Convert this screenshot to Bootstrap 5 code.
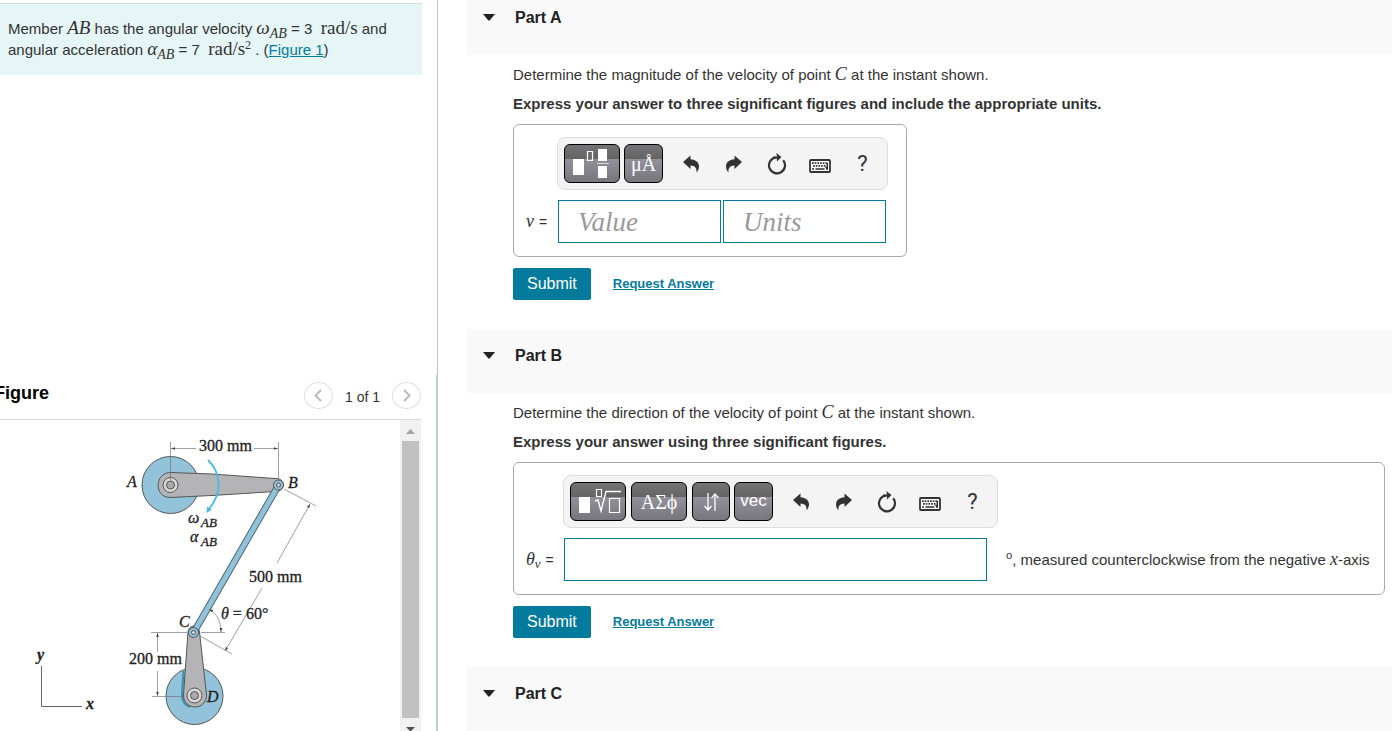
<!DOCTYPE html>
<html lang="en">
<head>
<meta charset="utf-8">
<meta name="viewport" content="width=device-width, initial-scale=1">
<title>Member AB angular velocity</title>
<link href="https://cdn.jsdelivr.net/npm/bootstrap@5.3.0/dist/css/bootstrap.min.css" rel="stylesheet">
<style>
  body { font-family: "Liberation Sans", Arial, sans-serif; font-size: 14px; line-height: 21px; color: #333; background: #fff; }
  a { color: #047b9c; }
  .side { width: 438px; flex: none; }
  .side-top { height: 375px; border-right: 1px solid #b9c6d6; padding: 3px 15px 0 0; }
  .side-figure { border-right: 2px solid #b8cde0; padding-right: 15px; }
  .intro { background: #e6f5f6; border-top: 1px solid #d5dde0; padding: 14px 8px 15px; }
  .intro, .prompt, .suffix { font-size: 15px; }
  .math { font-family: "Liberation Serif", serif; font-size: 18px; line-height: 0; }
  .intro .math { font-size: 19px; }
  .math sub { font-size: 14px; bottom: -4px; line-height: 0; }
  .math sup { font-size: 12px; line-height: 0; }
  .figure-head { height: 45px; border-bottom: 1px solid #d9d9d9; padding-bottom: 4px; }
  .figure-title { font-size: 18px; font-weight: 700; color: #000; margin: 0 0 2px -6px; }
  .pager { width: 29px; height: 27px; border: 1px solid #e0e0e0; border-radius: 50%; background: #fff; color: #bbb; }
  .scroll-track { width: 21px; background: #f1f1f1; padding: 9px 2px 0; }
  .scroll-thumb { background: #c1c1c1; height: 277px; margin: 7px 0 9px; }
  .drawing text { font-family: "Liberation Serif", serif; font-size: 16px; fill: #222; stroke: #222; stroke-width: .3px; }
  .drawing .it { font-style: italic; }
  .drawing .subs { font-size: 13px; }
  .main-col { padding-left: 29px; min-width: 0; }
  .part-head { background: #f9f9f9; padding: 15px 16px 25px; gap: 20px; }
  .part-head:first-child { padding-top: 6px; }
  .part-head h2 { font-size: 16px; font-weight: 700; line-height: 24px; color: #222; margin: 0; }
  .caret-btn { width: 12px; height: 22px; color: #222; margin-bottom: 2px; }
  .part-body { padding: 9px 7px 29px 46px; }
  .prompt { line-height: 21px; margin: 0 0 8px; }
  .answer-box { border: 1px solid #aaa; border-radius: 6px; padding: 12px 18px 13px 12px; margin: 10px 0 11px; }
  .answer-box.compact { width: 394px; }
  .label-a { width: 31px; }
  .label-b { width: 37px; }
  .tools { background: #f4f4f4; border: 1px solid #ddd; border-radius: 8px; height: 53px; padding: 0 3px 0 6px; width: max-content; gap: 4px; margin-bottom: 10px; }
  .math-tools .key.broad { margin-right: 1px; }
  .key { width: 56px; height: 39px; border: 1px solid #000; border-radius: 6px; color: #fff; padding: 0; line-height: 1;
    background: linear-gradient(#747476 0, #646464 38%, #92909a 39%, #77767c 100%); }
  .key.narrow { width: 39px; }
  .key.slim { width: 38px; }
  .key.serif { font-family: "Liberation Serif", serif; font-size: 20px; }
  .key.sans { font-size: 17px; padding-bottom: 3px; }
  .tool { width: 43px; height: 39px; color: #333; }
  .tool.help { font-family: Roboto, sans-serif; font-size: 22px; line-height: 1; }
  .icon-set { margin-left: 2px; }
  .entries { margin-left: 1px; gap: 2px; }
  .entry { height: 43px; border: 1px solid #047b9c; border-radius: 0; background: #fff; padding: 2px 19px 0; font-family: "Liberation Serif", serif; font-size: 27px; color: #333; }
  .entry::placeholder { font-style: italic; color: #999; }
  .entry.half { width: 163px; }
  .entry.wide { width: 423px; margin-right: 17px; min-width: 0; }
  .entry-label { margin-bottom: 10px; }
  .entry-label .math { font-size: 18px; margin-right: 1px; }
  .entry-label .math sub { font-size: 13px; bottom: -3px; }
  .submit { background: #047b9c; color: #fff; font-size: 16px; line-height: 30px; border-radius: 2px; padding: 0 14px; height: 32px; margin-right: 22px; }
  .request { font-size: 13px; font-weight: 700; padding-bottom: 2px; }
</style>
</head>
<body>
<svg width="0" height="0" class="position-absolute" aria-hidden="true">
  <symbol id="undo" viewBox="0 0 16 18"><path d="M0 7 7.500 .5v3.700c5.500.4 8.500 3.300 8.500 7 0 2.500-1 4.500-2.500 6.300.5-4.500-1.500-6.800-6-7V14z" fill="currentColor"/></symbol>
  <symbol id="redo" viewBox="0 0 16 18"><path d="M16 7 8.500 .5v3.700c-5.500.4-8.500 3.300-8.500 7 0 2.500 1 4.500 2.500 6.300-.5-4.500 1.500-6.800 6-7V14z" fill="currentColor"/></symbol>
  <symbol id="reset" viewBox="0 0 20 22"><path d="M16.200 7.300A8 8 0 1 1 8.500 4.500" fill="none" stroke="currentColor" stroke-width="2.200"/><path d="M6 3.400h4L9.200 0 14.500 4 10 8.400 9.800 5.600 6.500 6z" fill="currentColor"/></symbol>
  <symbol id="keys" viewBox="0 0 22 14"><rect x="1" y="1" width="20" height="12" rx="1" fill="#fff" stroke="currentColor" stroke-width="1.800"/><path d="M3 4.200h16M4 6.800h13" stroke="currentColor" stroke-width="1.700" stroke-dasharray="1.700 1"/><path d="M3 10h2M6.500 10h9M17 10h2M18.300 4v4.500h-2" fill="none" stroke="currentColor" stroke-width="1.500"/></symbol>
  <symbol id="caret" viewBox="0 0 12 7"><path d="M0 0h12L6.800 6.300q-.8.700-1.600 0z" fill="currentColor"/></symbol>
</svg>

<div class="d-flex min-vh-100">
  <aside class="side d-flex flex-column">
    <div class="side-top">
      <div class="intro">Member <i class="math">AB</i> has the angular velocity <span class="math"><i>ω<sub>AB</sub></i></span> = 3 &nbsp;<span class="math">rad/s</span> and angular acceleration <span class="math"><i>α<sub>AB</sub></i></span> = 7 &nbsp;<span class="math">rad/s<sup>2</sup></span> . (<a href="#figure">Figure 1</a>)</div>
    </div>
    <section class="side-figure flex-fill d-flex flex-column" id="figure">
      <div class="figure-head d-flex align-items-center">
        <h2 class="figure-title me-auto">Figure</h2>
        <button type="button" class="pager p-0 d-flex align-items-center justify-content-center" aria-label="Previous figure"><svg width="8" height="13" viewBox="0 0 8 13"><path d="M7 1 1.500 6.500 7 12" fill="none" stroke="currentColor" stroke-width="2"/></svg></button>
        <span class="px-2 pt-1 mx-1">1 of 1</span>
        <button type="button" class="pager p-0 d-flex align-items-center justify-content-center" aria-label="Next figure"><svg width="8" height="13" viewBox="0 0 8 13"><path d="m1 1 5.500 5.500L1 12" fill="none" stroke="currentColor" stroke-width="2"/></svg></button>
      </div>
      <div class="d-flex flex-fill">
        <div class="flex-fill">
          <svg class="drawing d-block" width="400" height="311" viewBox="0 420 400 311" role="img" aria-label="Linkage ABCD">
            <defs>
              <marker id="tip" viewBox="0 0 6 6" refX="6" refY="3" markerUnits="userSpaceOnUse" markerWidth="4" markerHeight="4" orient="auto-start-reverse"><path d="M0 1 6 3 0 5z" fill="#444"/></marker>
            </defs>
            <!-- disks and arms -->
            <circle cx="170.500" cy="485" r="28.500" fill="#93c3da" stroke="#555"/>
            <path d="M171 472.500 212 474l63 4.500c11-1 11 13.500 0 13L212 495.500 170 497.500c-16 0-16-25 1-25z" fill="#b4b4b6" stroke="#555"/>
            <circle cx="194.500" cy="696" r="28.500" fill="#93c3da" stroke="#555"/>
            <path d="M183.500 671 182 695c0 7 4 11 8 12" fill="none" stroke="#3592ad" stroke-width="2"/>
            <path d="M188 632 183.500 695c0 16 23 16 23 0L199.500 632c-1-8-10.500-8-11.500 0z" fill="#b4b4b6" stroke="#555"/>
            <path d="M277.500 487 194 632" stroke="#4f6773" stroke-width="7"/>
            <path d="M277.500 487 194 632" stroke="#8fc3da" stroke-width="5"/>
            <g fill="#d8d8d8" stroke="#555">
              <circle cx="170.500" cy="485" r="7.500"/><circle cx="170.500" cy="485" r="4" fill="#aaa"/>
              <circle cx="194.500" cy="695.500" r="7.500"/><circle cx="194.500" cy="695.500" r="4" fill="#aaa"/>
              <circle cx="278.500" cy="485" r="5" fill="#8fc3da"/><circle cx="278.500" cy="485" r="2"/>
              <circle cx="193.500" cy="632.500" r="5" fill="#8fc3da"/><circle cx="193.500" cy="632.500" r="2"/>
            </g>
            <!-- dimension lines -->
            <g fill="none" stroke="#777" stroke-width=".7">
              <path d="M170.500 442v39M278.500 442v39M284 489l32 17M200 636l32 18M151 632.500h36M201 632.500h24M152 696.500h31"/>
              <path d="M196 448.500h-25" marker-end="url(#tip)"/>
              <path d="M254 448.500h24" marker-end="url(#tip)"/>
              <path d="M277 563l33-59" marker-end="url(#tip)"/>
              <path d="M262 588 225 651" marker-end="url(#tip)"/>
              <path d="M157.500 652v-19" marker-end="url(#tip)"/>
              <path d="M157.500 671v25" marker-end="url(#tip)"/>
              <path d="M209 609c8 5 12 12 12 23" marker-start="url(#tip)" marker-end="url(#tip)"/>
            </g>
            <path d="M208 460c13 13 15 32 1 49" fill="none" stroke="#45bce8" stroke-width="1.800"/>
            <path d="m206.500 513 .6-6.500 4.500 3.300z" fill="#45bce8"/>
            <path d="M41.500 666v40.500H82" fill="none" stroke="#666"/>
            <text x="199" y="451">300 mm</text>
            <text x="249" y="582">500 mm</text>
            <text x="129" y="664">200 mm</text>
            <text x="221" y="619"><tspan class="it">θ</tspan> = 60°</text>
            <g class="it">
              <text x="127" y="487">A</text><text x="288" y="488">B</text>
              <text x="179" y="627">C</text><text x="207" y="702">D</text>
              <text x="188" y="523">ω<tspan class="subs" x="201" y="527">AB</tspan></text>
              <text x="190" y="542">α<tspan class="subs" x="201" y="546">AB</tspan></text>
              <text x="37" y="660" font-weight="bold">y</text><text x="86" y="709" font-weight="bold">x</text>
            </g>
          </svg>
        </div>
        <div class="scroll-track" aria-hidden="true">
          <svg class="d-block mx-auto" width="9" height="5" viewBox="0 0 9 5"><path d="M0 5 4.500 0 9 5z" fill="#a3a3a3"/></svg>
          <div class="scroll-thumb"></div>
          <svg class="d-block mx-auto" width="9" height="4" viewBox="0 0 9 4"><path d="M0 0h9L5 4H4z" fill="#505050"/></svg>
        </div>
      </div>
    </section>
  </aside>

  <main class="main-col flex-fill">
    <div class="part-head d-flex align-items-center">
      <button type="button" class="caret-btn btn p-0 border-0 d-flex align-items-center" aria-label="Collapse Part A"><svg width="12" height="7"><use href="#caret"/></svg></button>
      <h2>Part A</h2>
    </div>
    <section class="part-body">
      <p class="prompt">Determine the magnitude of the velocity of point <i class="math">C</i> at the instant shown.</p>
      <p class="prompt fw-bold">Express your answer to three significant figures and include the appropriate units.</p>
      <div class="answer-box compact d-flex">
        <div class="label-a flex-shrink-0 d-flex align-items-end"><label class="entry-label" for="value"><i class="math">v</i> =</label></div>
        <div>
          <div class="tools d-flex align-items-center">
            <button type="button" class="key broad" aria-label="Templates"><svg width="54" height="37" viewBox="0 0 54 37"><path d="M8 14h11v16H8zM33 4h9v12h-9zM33 21h9v12h-9z" fill="#fff"/><path d="M22.500 6.500h5v9h-5z" fill="none" stroke="#fff" stroke-width="1.200"/><path d="M32 18.500h12" stroke="#ddd"/></svg></button>
            <button type="button" class="key narrow serif">μÅ</button>
            <div class="icon-set d-flex">
              <button type="button" class="tool btn p-0 border-0" aria-label="Undo"><svg width="16" height="18"><use href="#undo"/></svg></button>
              <button type="button" class="tool btn p-0 border-0" aria-label="Redo"><svg width="16" height="18"><use href="#redo"/></svg></button>
              <button type="button" class="tool btn p-0 border-0" aria-label="Reset"><svg width="20" height="22"><use href="#reset"/></svg></button>
              <button type="button" class="tool btn p-0 border-0 pt-1" aria-label="Keyboard shortcuts"><svg width="22" height="14"><use href="#keys"/></svg></button>
              <button type="button" class="tool help btn p-0 border-0">?</button>
            </div>
          </div>
          <div class="entries d-flex">
            <input class="entry half" id="value" type="text" placeholder="Value">
            <input class="entry half" type="text" placeholder="Units" aria-label="Units">
          </div>
        </div>
      </div>
      <div class="d-flex align-items-center">
        <button type="button" class="submit btn border-0">Submit</button>
        <a class="request" href="#request-a">Request Answer</a>
      </div>
    </section>

    <div class="part-head d-flex align-items-center">
      <button type="button" class="caret-btn btn p-0 border-0 d-flex align-items-center" aria-label="Collapse Part B"><svg width="12" height="7"><use href="#caret"/></svg></button>
      <h2>Part B</h2>
    </div>
    <section class="part-body">
      <p class="prompt">Determine the direction of the velocity of point <i class="math">C</i> at the instant shown.</p>
      <p class="prompt fw-bold">Express your answer using three significant figures.</p>
      <div class="answer-box d-flex">
        <div class="label-b flex-shrink-0 d-flex align-items-end"><label class="entry-label" for="theta"><i class="math">θ<sub>v</sub></i> =</label></div>
        <div class="flex-fill">
          <div class="tools math-tools d-flex align-items-center">
            <button type="button" class="key broad" aria-label="Math templates"><svg width="54" height="37" viewBox="0 0 54 37"><path d="M8 14h11v16H8z" fill="#fff"/><path d="M25.500 6.500h5v7h-5zM38.500 15.500h10v14h-10z" fill="none" stroke="#fff" stroke-width="1.200"/><path d="m24 18 3-1 3 11 5-19.500h15" fill="none" stroke="#fff" stroke-width="1.400"/></svg></button>
            <button type="button" class="key broad serif">ΑΣϕ</button>
            <button type="button" class="key slim" aria-label="Arrows"><svg width="36" height="37" viewBox="0 0 36 37"><path d="M15 10v17m-3.500-4 3.500 4 3.500-4M22 28V11m-3.500 4 3.500-4 3.500 4" fill="none" stroke="#fff" stroke-width="1.300"/></svg></button>
            <button type="button" class="key narrow sans">vec</button>
            <div class="icon-set d-flex">
              <button type="button" class="tool btn p-0 border-0" aria-label="Undo"><svg width="16" height="18"><use href="#undo"/></svg></button>
              <button type="button" class="tool btn p-0 border-0" aria-label="Redo"><svg width="16" height="18"><use href="#redo"/></svg></button>
              <button type="button" class="tool btn p-0 border-0" aria-label="Reset"><svg width="20" height="22"><use href="#reset"/></svg></button>
              <button type="button" class="tool btn p-0 border-0 pt-1" aria-label="Keyboard shortcuts"><svg width="22" height="14"><use href="#keys"/></svg></button>
              <button type="button" class="tool help btn p-0 border-0">?</button>
            </div>
          </div>
          <div class="entries d-flex align-items-center">
            <input class="entry wide" id="theta" type="text">
            <span class="suffix text-nowrap"><sup>o</sup>, measured counterclockwise from the negative <i class="math">x</i>-axis</span>
          </div>
        </div>
      </div>
      <div class="d-flex align-items-center">
        <button type="button" class="submit btn border-0">Submit</button>
        <a class="request" href="#request-b">Request Answer</a>
      </div>
    </section>

    <div class="part-head d-flex align-items-center">
      <button type="button" class="caret-btn btn p-0 border-0 d-flex align-items-center" aria-label="Expand Part C"><svg width="12" height="7"><use href="#caret"/></svg></button>
      <h2>Part C</h2>
    </div>
  </main>
</div>
<script src="https://cdn.jsdelivr.net/npm/bootstrap@5.3.0/dist/js/bootstrap.bundle.min.js"></script>
</body>
</html>
